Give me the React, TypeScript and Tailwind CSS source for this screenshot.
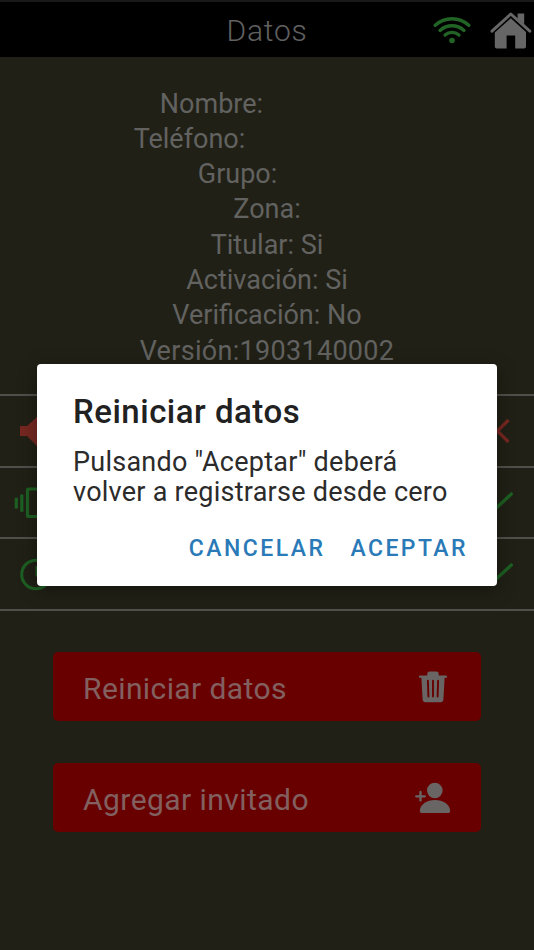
import React from "react";

const details = [
  { text: "Nombre:", className: "pr-[111px]" },
  { text: "Teléfono:", className: "pr-[155px]" },
  { text: "Grupo:", className: "pr-[59px]" },
  { text: "Zona:", className: "" },
  { text: "Titular: Si", className: "" },
  { text: "Activación: Si", className: "" },
  { text: "Verificación: No", className: "" },
  { text: "Versión:1903140002", className: "tracking-[0.3px]" },
];

const WifiIcon = () => (
  <svg width="38" height="28" viewBox="0 0 38 28" fill="none" stroke="#226426" strokeWidth="3.4" strokeLinecap="round">
    <path d="M2.2 9.3C12 .6 26 .6 35.8 9.3" />
    <path d="M7 14.4c7-6.2 17-6.2 24 0" />
    <path d="M12.1 19.1c4-3.6 9.8-3.6 13.8 0" />
    <circle cx="19" cy="24.5" r="2.8" fill="#226426" stroke="none" />
  </svg>
);

const HomeIcon = () => (
  <svg width="42" height="38" viewBox="0 0 42 38" fill="#666">
    <path d="M2 20.2 20.8 3 39.8 20.2" fill="none" stroke="#666" strokeWidth="3" strokeLinecap="round" strokeLinejoin="round" />
    <path d="M27.6 2.5h6.6v11l-6.6-6z" />
    <path d="M20.8 7.2 36 21v14.6a2 2 0 0 1-2 2h-8.8V24.6h-8.6v13H6.8a2 2 0 0 1-2-2V21.6z" />
  </svg>
);

const SpeakerIcon = () => (
  <svg width="44" height="36" viewBox="0 0 44 36" fill="#752720">
    <path d="M4 13h7L22 3v31L11 23H4z" />
  </svg>
);

const VibrateIcon = () => (
  <svg className="overflow-visible" width="44" height="36" viewBox="0 0 44 36" fill="none" stroke="#1d5f22" strokeWidth="3.2">
    <rect x="11.5" y="4" width="17" height="27.5" rx="1" />
    <path d="M.3 12.8v10.6M5.8 9.5v17.2M34 9.5v17.2M39.5 12.8v10.6" />
  </svg>
);

const ClockIcon = () => (
  <svg width="44" height="36" viewBox="0 0 44 36" fill="none" stroke="#1d5f22" strokeWidth="3">
    <circle cx="20" cy="18.5" r="14.3" />
    <path d="M21 10v9l6 4" />
  </svg>
);

const CrossIcon = () => (
  <svg width="28" height="28" viewBox="0 0 28 28" fill="none" stroke="#752720" strokeWidth="3.3">
    <path d="M1.5 3 23.5 25M23.5 3 1.5 25" />
  </svg>
);

const CheckIcon = () => (
  <svg width="28" height="28" viewBox="0 0 28 28" fill="none" stroke="#1d5f22" strokeWidth="3.3">
    <path d="m0 14 8 8L27.5 4" />
  </svg>
);

const TrashIcon = () => (
  <svg width="28" height="32" viewBox="0 0 28 32" fill="#6a6565">
    <path d="M0 5.5A1 1 0 0 1 1 4.6h7.3V3a2.5 2.5 0 0 1 2.5-2.5h6.4A2.5 2.5 0 0 1 19.7 3v1.6H27a1 1 0 0 1 1 .9v1.3h-2.4l-1.2 21.5a3 3 0 0 1-3 2.9H6.6a3 3 0 0 1-3-2.9L2.4 6.8H0z" />
    <path d="M8.9 9.8 9.4 25.5M14 9.8v15.7M19.1 9.8 18.6 25.5" stroke="#690000" strokeWidth="1.9" strokeLinecap="round" />
  </svg>
);

const AddPersonIcon = () => (
  <svg width="36" height="32" viewBox="0 0 36 32" fill="#6a6565">
    <circle cx="19.8" cy="8.5" r="7.8" />
    <path d="M4.8 29.2C4.8 22.5 12 18 20 18s15.2 4.5 15.2 11.2a1.8 1.8 0 0 1-1.8 1.8H6.6a1.8 1.8 0 0 1-1.8-1.8z" />
    <path d="M1.2 14.3h8.6M5.5 10v8.6" stroke="#6a6565" strokeWidth="2.3" strokeLinecap="round" />
  </svg>
);

const settings = [
  { id: "sound", icon: SpeakerIcon, status: CrossIcon },
  { id: "vibration", icon: VibrateIcon, status: CheckIcon },
  { id: "clock", icon: ClockIcon, status: CheckIcon },
];

const App: React.FC = () => {
  return (
    <div className="relative h-[950px] w-[534px] overflow-hidden bg-[#202016] font-['Roboto',sans-serif] text-[#626260]">
      {/* Header */}
      <header className="flex h-[57px] items-center border-t-2 border-[#191919] bg-black">
        <div className="flex-1" />
        <h1 className="pl-[2px] pt-[3px] text-[30px] font-light leading-9 tracking-[0.8px] text-[#606060]">Datos</h1>
        <div className="flex flex-1 items-center justify-end gap-[19px] pr-[2px]">
          <WifiIcon />
          <HomeIcon />
        </div>
      </header>

      {/* User details */}
      <section className="h-[337px] pt-[29.6px] text-center text-[27px] leading-[35.3px]">
        {details.map((item) => (
          <p key={item.text} className={item.className}>
            {item.text}
          </p>
        ))}
      </section>

      {/* Settings rows */}
      <section className="border-t-2 border-[#50504b]">
        {settings.map((item) => (
          <div
            key={item.id}
            className="flex h-[71.7px] items-center justify-between border-b-2 border-[#50504b] pl-4 pr-[21px]"
          >
            <item.icon />
            <item.status />
          </div>
        ))}
      </section>

      {/* Actions */}
      <section className="flex flex-col gap-[42px] px-[53px] pt-[41px]">
        <button className="flex h-[69px] w-[427.5px] items-center justify-between rounded-[5px] bg-[#690000] pl-[30px] pr-[34px]">
          <span className="pt-[4px] text-[30px] leading-9 tracking-[0.4px] text-[#826060]">Reiniciar datos</span>
          <TrashIcon />
        </button>
        <button className="flex h-[69px] w-[427.5px] items-center justify-between rounded-[5px] bg-[#690000] pl-[30px] pr-[30px]">
          <span className="pt-[4px] text-[30px] leading-9 tracking-[0.45px] text-[#826060]">Agregar invitado</span>
          <AddPersonIcon />
        </button>
      </section>

      {/* Confirmation dialog */}
      <div
        role="dialog"
        className="absolute left-[37px] top-[364px] h-[222px] w-[460px] rounded-[4px] bg-white pl-9 pr-[29px] pt-[29px] shadow-[0_4px_18px_rgba(0,0,0,0.35)]"
      >
        <h2 className="text-[33px] font-medium leading-[38px] tracking-[0.5px] text-[#212121]">Reiniciar datos</h2>
        <p className="mt-4 whitespace-nowrap text-[27px] leading-[30px] tracking-[0.25px] text-[#2b2b2b]">
          Pulsando "Aceptar" deberá
          <br />
          volver a registrarse desde cero
        </p>
        <div className="mt-[28px] flex justify-end gap-[25px] text-[23px] font-medium leading-7 tracking-[2.45px] text-[#2a7ab8]">
          <button>CANCELAR</button>
          <button>ACEPTAR</button>
        </div>
      </div>
    </div>
  );
};

export default App;
